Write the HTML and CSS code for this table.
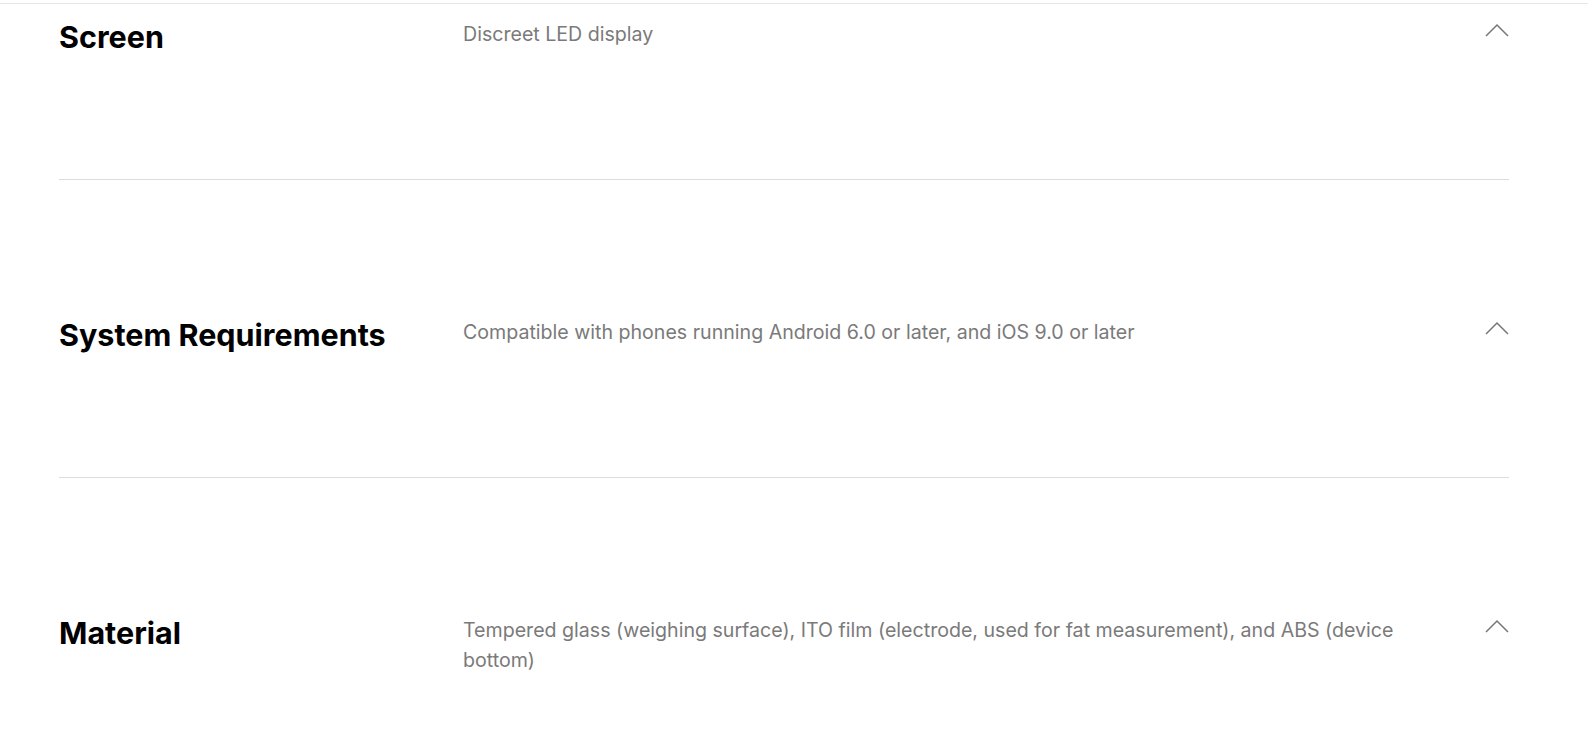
FILE: index.html
```html
<!DOCTYPE html>
<html lang="en">
<head>
<meta charset="utf-8">
<title>Specs</title>
<link rel="stylesheet" href="styles.css">
</head>
<body>
<div class="topline"></div>
<section class="specs">
  <div class="spec spec-first">
    <h3 class="spec-title">Screen</h3>
    <p class="spec-desc">Discreet LED display</p>
    <svg class="chevron" viewBox="0 0 24 14" width="24" height="14"><polyline points="1,13 12,2 23,13"/></svg>
  </div>
  <div class="spec">
    <h3 class="spec-title">System Requirements</h3>
    <p class="spec-desc">Compatible with phones running Android 6.0 or later, and iOS 9.0 or later</p>
    <svg class="chevron" viewBox="0 0 24 14" width="24" height="14"><polyline points="1,13 12,2 23,13"/></svg>
  </div>
  <div class="spec">
    <h3 class="spec-title">Material</h3>
    <p class="spec-desc">Tempered glass (weighing surface), ITO film (electrode, used for fat measurement), and ABS (device bottom)</p>
    <svg class="chevron" viewBox="0 0 24 14" width="24" height="14"><polyline points="1,13 12,2 23,13"/></svg>
  </div>
</section>
</body>
</html>
```
FILE: styles.css
```css
html, body {
  margin: 0;
  padding: 0;
  background: #fff;
  overflow: hidden;
}
body {
  font-family: Inter, "Noto Sans", sans-serif;
}
.topline {
  height: 3px;
  border-bottom: 1px solid #e6e6e6;
}
.specs {
  margin: 0 79px 0 59px;
}
.spec {
  display: flex;
  align-items: flex-start;
  padding: 135px 0 122px;
  border-bottom: 1px solid #dcdcdc;
}
.spec-first {
  padding-top: 13px;
}
.spec-title {
  flex: 0 0 404px;
  margin: 0;
  font-size: 30.5px;
  line-height: 40px;
  font-weight: 700;
  color: #000;
}
.spec-desc {
  width: 960px;
  margin: 2px 0 0;
  font-size: 19.6px;
  line-height: 30px;
  color: #7a7a7a;
}
.chevron {
  margin-left: auto;
  margin-top: 6px;
  fill: none;
  stroke: #777;
  stroke-width: 1.5;
}
```
